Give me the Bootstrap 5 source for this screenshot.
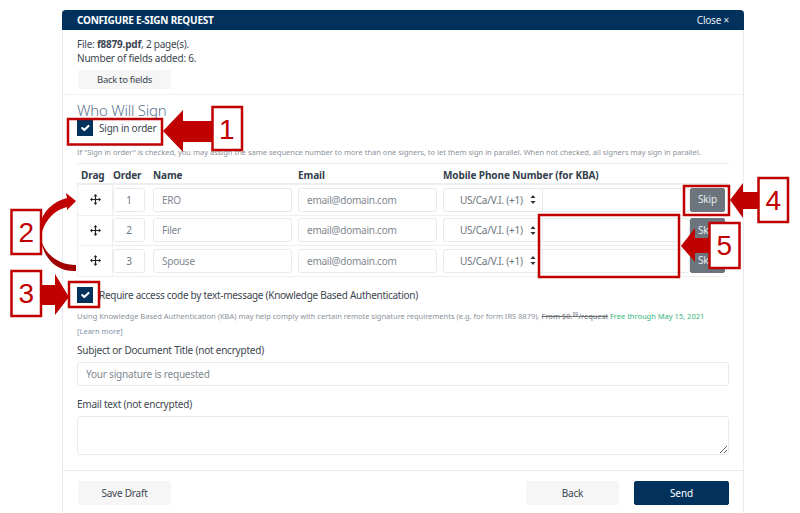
<!DOCTYPE html>
<html lang="en">
<head>
<meta charset="utf-8">
<title>Configure e-sign request</title>
<link href="https://cdn.jsdelivr.net/npm/bootstrap@5.3.0/dist/css/bootstrap.min.css" rel="stylesheet">
<style>
html,body{height:513px;overflow:hidden;background:#fff}
body{font-family:"Noto Sans","Open Sans","Liberation Sans",sans-serif;font-size:10px;letter-spacing:-.22px;color:#3d4650;position:relative;line-height:14px}
.sheet{position:absolute;left:62px;top:10px;width:682px;height:503px;border-left:1px solid #e9ecef;border-right:1px solid #e9ecef}
.sheet-head{background:#02325c;color:#fff;height:20px;border-radius:4px 4px 0 0;margin:0 -1px;padding:0 15px 0 15px}
.sheet-head b{font-weight:700}
.head-close{color:#e6edf3}
.top-zone{padding:7px 14px 0;height:65px;border-bottom:1px solid #eef0f2}
.soft-btn{--bs-btn-bg:#f6f6f7;--bs-btn-border-color:#f6f6f7;--bs-btn-color:#3d4650;border-radius:2px;width:93px;height:19px;padding:0;font-size:9.5px;letter-spacing:-.3px;line-height:17px;display:block}
.top-zone .soft-btn{margin:5px 0 0 1px}
.main-zone{padding:6px 14px 0}
.who{font-size:15px;letter-spacing:-.25px;line-height:18px;color:#5d7893;font-weight:300;margin:0}
.chk-line{height:16px;margin-top:1px}
.form-check-input.tick{width:16px;height:16px;margin:0;border-radius:0;flex:none;--bs-form-check-bg:#02325c;background-color:#02325c;border-color:#02325c}
.chk-label{margin-left:6px;padding-top:0}
.kba-text{letter-spacing:-.28px}
.fine{font-size:7.5px;letter-spacing:0;color:#8a929a;line-height:15px;white-space:nowrap}
.fine-top{margin-top:9px}
.rule{border-top:1px solid #e9ecef;margin-top:3px}
.signers{display:grid;grid-template-columns:36px 40px 139px 6px 139px 6px 99px 148px 39px;width:652px}
.colhead{font-weight:700;color:#33404c;height:21px;line-height:22px;white-space:nowrap;border-bottom:2px solid #eceeef;letter-spacing:-.1px}
.cellb{height:30.500px;border-bottom:1px solid #edf0f0}
.dragc{border-left:1px solid #edf0f0;border-right:1px solid #edf0f0}
.form-control.fld,.form-select.fld{height:24px;min-height:24px;border:1px solid #e6ecec;border-radius:3px;font-size:10px;letter-spacing:-.25px;padding:0 8px;box-shadow:none;background-color:#fff;color:#6c757d;line-height:22px}
.fld::placeholder,.txt-in::placeholder{color:#808890;opacity:1}
.form-control.fld.num{width:32px;text-align:center;padding:0}
.form-select.fld.sel{width:99px;border-radius:3px 0 0 3px;border-right:0;padding:0 12px 0 16px;background-size:6px 9px;background-position:right 6px center;background-image:url("data:image/svg+xml,%3Csvg xmlns='http://www.w3.org/2000/svg' viewBox='0 0 6 9'%3E%3Cpath d='M3 0l2.500 3H.5zM3 9L.5 6h5z' fill='%23333'/%3E%3C/svg%3E")}
.form-control.fld.tel{border-radius:0 3px 3px 0;width:148px}
.skip-btn{--bs-btn-bg:#6c757d;--bs-btn-border-color:#6c757d;--bs-btn-color:#e9ecef;border-radius:2px;width:35px;height:24px;padding:0;font-size:10px;letter-spacing:-.1px}
.skipc{padding-right:4px}
.kba-line{margin-top:10px}
.fine-a{margin-top:6px}
.fine a{color:#7f93a8;text-decoration:none}
.fine s{color:#6b7177}
.fine sup{font-size:5px}
.free{color:#33b57a}
.lbl{display:block;margin:0;line-height:14px}
.form-control.txt-in{height:24px;min-height:24px;border:1px solid #e6ecec;border-radius:3px;font-size:10px;letter-spacing:-.2px;padding:0 8px;margin-top:5px}
.form-control.txt-ar{height:39px;min-height:39px;border:1px solid #e6ecec;border-radius:3px;margin-top:5px;padding:4px 8px}
.sheet-foot{position:absolute;left:0;right:0;top:460px;height:43px;border-top:1px solid #e9ecef;padding:10px 14px 0 15px}
.sheet-foot .soft-btn{height:24px;line-height:22px;font-size:10px;letter-spacing:-.22px}
.send-btn{--bs-btn-bg:#02325c;--bs-btn-border-color:#02325c;--bs-btn-color:#fff;border-radius:2px;width:95px;height:24px;padding:0;font-size:10px;letter-spacing:-.1px}
.note-layer{position:absolute;left:0;top:0;width:800px;height:513px;pointer-events:none}
.note-num{font-family:"Liberation Sans",Arial,sans-serif;font-size:28px;letter-spacing:0;fill:#c00000}
</style>
</head>
<body>
<div class="sheet">
  <div class="sheet-head d-flex justify-content-between align-items-center"><b>CONFIGURE E-SIGN REQUEST</b><span class="head-close">Close ×</span></div>
  <div class="top-zone">
    <div>File: <b>f8879.pdf</b>, 2 page(s).</div>
    <div>Number of fields added: 6.</div>
    <button class="btn soft-btn" type="button">Back to fields</button>
  </div>
  <div class="main-zone">
    <h2 class="who">Who Will Sign</h2>
    <div class="chk-line d-flex align-items-center"><input class="form-check-input tick" type="checkbox" checked aria-label="Sign in order"><span class="chk-label">Sign in order</span></div>
    <div class="fine fine-top">If "Sign in order" is checked, you may assign the same sequence number to more than one signers, to let them sign in parallel. When not checked, all signers may sign in parallel.</div>
    <div class="rule"></div>
    <div class="signers">
      <div class="colhead ps-1">Drag</div><div class="colhead">Order</div><div class="colhead">Name</div><div class="colhead"></div><div class="colhead">Email</div><div class="colhead"></div><div class="colhead">Mobile Phone Number (for KBA)</div><div class="colhead"></div><div class="colhead"></div>

      <div class="cellb dragc d-flex align-items-center justify-content-center"><svg width="11" height="11" viewBox="0 0 11 11"><path d="M5.500 0L3.600 2.200h1.300v2.700H2.200V3.600L0 5.500l2.200 1.900V6.100h2.700v2.700H3.600L5.500 11l1.900-2.200H6.100V6.100h2.700v1.300L11 5.500 8.800 3.600v1.300H6.100V2.200h1.300z" fill="#222"/></svg></div>
      <div class="cellb d-flex align-items-center"><input class="form-control fld num" value="1" aria-label="Order"></div><div class="cellb d-flex align-items-center"><input class="form-control fld" placeholder="ERO" aria-label="Name"></div><div class="cellb"></div><div class="cellb d-flex align-items-center"><input class="form-control fld" placeholder="email@domain.com" aria-label="Email"></div><div class="cellb"></div><div class="cellb d-flex align-items-center"><select class="form-select fld sel" aria-label="Country"><option>US/Ca/V.I. (+1)</option></select></div><div class="cellb d-flex align-items-center"><input class="form-control fld tel" aria-label="Phone"></div><div class="cellb skipc d-flex align-items-center justify-content-end"><button class="btn skip-btn" type="button">Skip</button></div>

      <div class="cellb dragc d-flex align-items-center justify-content-center"><svg width="11" height="11" viewBox="0 0 11 11"><path d="M5.500 0L3.600 2.200h1.300v2.700H2.200V3.600L0 5.500l2.200 1.900V6.100h2.700v2.700H3.600L5.500 11l1.900-2.200H6.100V6.100h2.700v1.300L11 5.500 8.800 3.600v1.300H6.100V2.200h1.300z" fill="#222"/></svg></div>
      <div class="cellb d-flex align-items-center"><input class="form-control fld num" value="2" aria-label="Order"></div><div class="cellb d-flex align-items-center"><input class="form-control fld" placeholder="Filer" aria-label="Name"></div><div class="cellb"></div><div class="cellb d-flex align-items-center"><input class="form-control fld" placeholder="email@domain.com" aria-label="Email"></div><div class="cellb"></div><div class="cellb d-flex align-items-center"><select class="form-select fld sel" aria-label="Country"><option>US/Ca/V.I. (+1)</option></select></div><div class="cellb d-flex align-items-center"><input class="form-control fld tel" aria-label="Phone"></div><div class="cellb skipc d-flex align-items-center justify-content-end"><button class="btn skip-btn" type="button">Skip</button></div>

      <div class="cellb dragc d-flex align-items-center justify-content-center"><svg width="11" height="11" viewBox="0 0 11 11"><path d="M5.500 0L3.600 2.200h1.300v2.700H2.200V3.600L0 5.500l2.200 1.900V6.100h2.700v2.700H3.600L5.500 11l1.900-2.200H6.100V6.100h2.700v1.300L11 5.500 8.800 3.600v1.300H6.100V2.200h1.300z" fill="#222"/></svg></div>
      <div class="cellb d-flex align-items-center"><input class="form-control fld num" value="3" aria-label="Order"></div><div class="cellb d-flex align-items-center"><input class="form-control fld" placeholder="Spouse" aria-label="Name"></div><div class="cellb"></div><div class="cellb d-flex align-items-center"><input class="form-control fld" placeholder="email@domain.com" aria-label="Email"></div><div class="cellb"></div><div class="cellb d-flex align-items-center"><select class="form-select fld sel" aria-label="Country"><option>US/Ca/V.I. (+1)</option></select></div><div class="cellb d-flex align-items-center"><input class="form-control fld tel" aria-label="Phone"></div><div class="cellb skipc d-flex align-items-center justify-content-end"><button class="btn skip-btn" type="button">Skip</button></div>
    </div>
    <div class="chk-line kba-line d-flex align-items-center"><input class="form-check-input tick" type="checkbox" checked aria-label="Require access code"><span class="chk-label kba-text">Require access code by text-message (Knowledge Based Authentication)</span></div>
    <div class="fine fine-a">Using Knowledge Based Authentication (KBA) may help comply with certain remote signature requirements (e.g. for form IRS 8879). <s>From $0.<sup>99</sup>/request</s> <span class="free">Free through May 15, 2021</span></div>
    <div class="fine"><a href="#">[Learn more]</a></div>
    <label class="lbl mt-1">Subject or Document Title (not encrypted)</label>
    <input class="form-control txt-in" placeholder="Your signature is requested" aria-label="Subject">
    <label class="lbl" style="margin-top:11px">Email text (not encrypted)</label>
    <textarea class="form-control txt-ar" aria-label="Email text"></textarea>
  </div>
  <div class="sheet-foot d-flex justify-content-between">
    <button class="btn soft-btn" type="button">Save Draft</button>
    <div class="d-flex" style="gap:15px"><button class="btn soft-btn" type="button">Back</button><button class="btn send-btn" type="button">Send</button></div>
  </div>
</div>

<svg class="note-layer" viewBox="0 0 800 513" xmlns="http://www.w3.org/2000/svg">
  <!-- 1 -->
  <rect x="68" y="119" width="94" height="25.500" fill="none" stroke="#c00000" stroke-width="2.500"/>
  <path d="M163 131L183 110v11h30v21h-30v10z" fill="#c00000"/>
  <rect x="212.500" y="107" width="29.500" height="43" fill="#fff" stroke="#c00000" stroke-width="2.500"/>
  <text class="note-num" x="219" y="139">1</text>
  <!-- 2 -->
  <path d="M76 201L66 193L67 198C52 202 42 212 40 226L42 232C46 219 55 210 67 207L67 210z" fill="#c00000"/>
  <path d="M41 240C46 256 60 265 76 265L76 271C58 272 44 260 41 240z" fill="#a00000"/>
  <rect x="11.500" y="210" width="29.500" height="44" fill="#fff" stroke="#c00000" stroke-width="2.500"/>
  <text class="note-num" x="18.500" y="242">2</text>
  <!-- 3 -->
  <path d="M41 285h14v-11l14 23-14 18v-10h-14z" fill="#c00000"/>
  <rect x="11.500" y="271" width="29.500" height="45" fill="#fff" stroke="#c00000" stroke-width="2.500"/>
  <text class="note-num" x="18.500" y="303">3</text>
  <rect x="69" y="282" width="30" height="25" fill="none" stroke="#c00000" stroke-width="2.500"/>
  <!-- 4 -->
  <rect x="684" y="186" width="45" height="29" fill="none" stroke="#c00000" stroke-width="2.500"/>
  <path d="M730 200L743 183v9h16v17h-16v9z" fill="#c00000"/>
  <rect x="758.500" y="178" width="29.500" height="44" fill="#fff" stroke="#c00000" stroke-width="2.500"/>
  <text class="note-num" x="765.500" y="210">4</text>
  <!-- 5 -->
  <rect x="539" y="215" width="140" height="62" fill="none" stroke="#c00000" stroke-width="2.500"/>
  <path d="M681 246L695 228v10h15v15h-15v9z" fill="#c00000"/>
  <rect x="709.500" y="223" width="30" height="45" fill="#fff" stroke="#c00000" stroke-width="2.500"/>
  <text class="note-num" x="716.500" y="255">5</text>
</svg>
<script src="https://cdn.jsdelivr.net/npm/bootstrap@5.3.0/dist/js/bootstrap.bundle.min.js"></script>
</body>
</html>
